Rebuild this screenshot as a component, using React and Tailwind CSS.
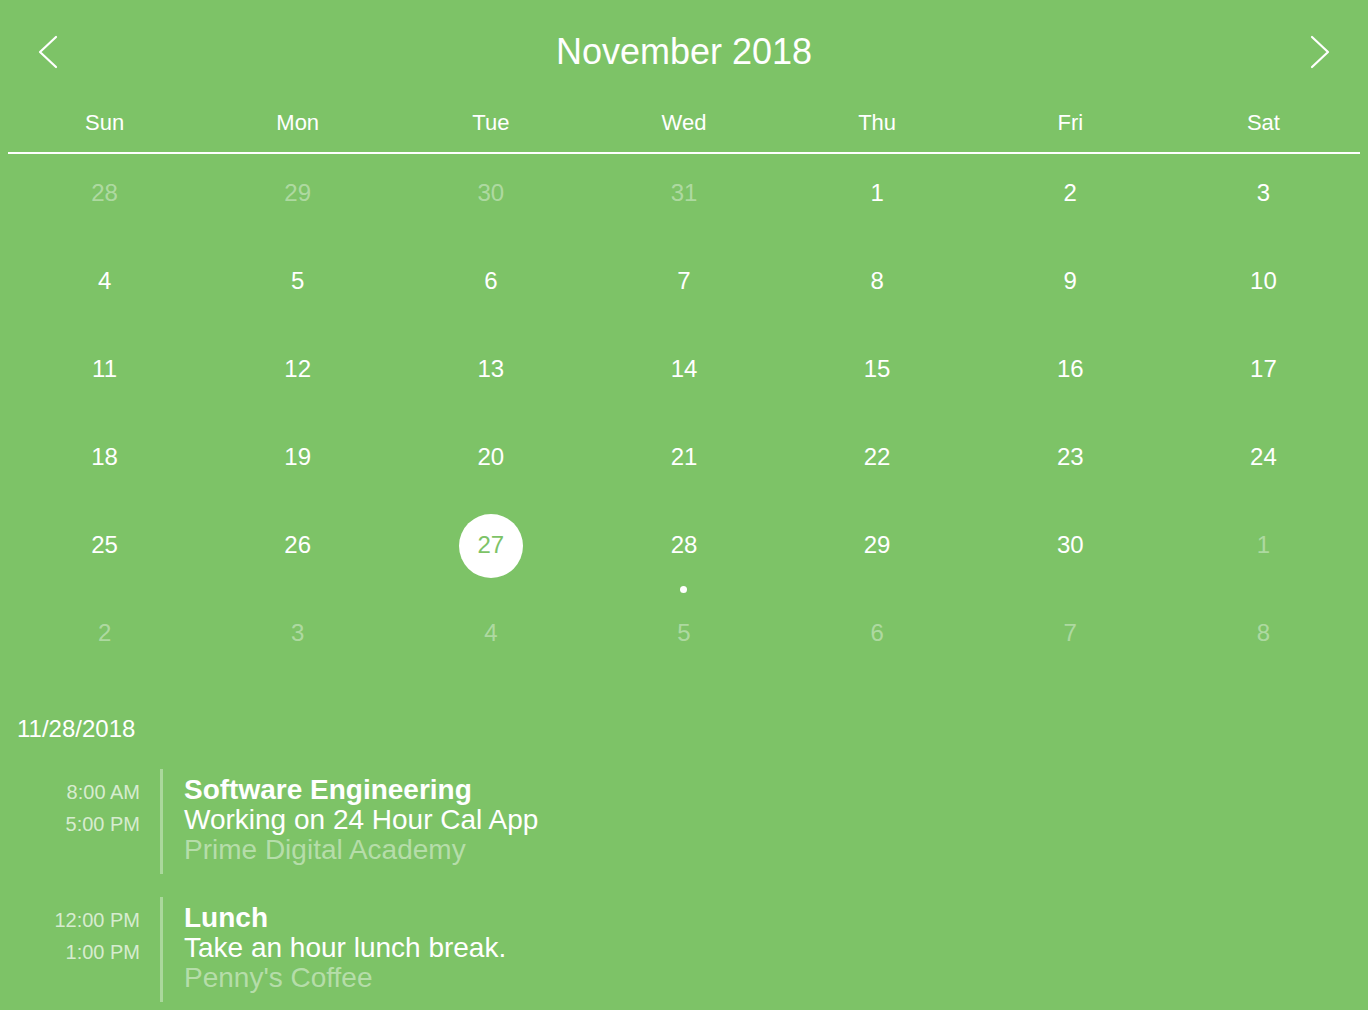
import React from 'react';

const DAYS = ['Sun', 'Mon', 'Tue', 'Wed', 'Thu', 'Fri', 'Sat'];

const buildWeeks = () => {
  const cells = [];
  [28, 29, 30, 31].forEach((d) => cells.push({ d, muted: true }));
  for (let d = 1; d <= 30; d++) cells.push({ d, muted: false, today: d === 27, dot: d === 28 });
  for (let d = 1; d <= 8; d++) cells.push({ d, muted: true });
  const weeks = [];
  for (let i = 0; i < cells.length; i += 7) weeks.push(cells.slice(i, i + 7));
  return weeks;
};

const EVENTS = [
  { start: '8:00 AM', end: '5:00 PM', title: 'Software Engineering', desc: 'Working on 24 Hour Cal App', place: 'Prime Digital Academy' },
  { start: '12:00 PM', end: '1:00 PM', title: 'Lunch', desc: 'Take an hour lunch break.', place: "Penny's Coffee" },
];

const Chevron = ({ dir }) => (
  <svg width="20" height="34" viewBox="0 0 20 34" fill="none" stroke="white" strokeWidth="2.2" strokeLinecap="round" strokeLinejoin="round">
    {dir === 'left' ? <path d="M18 2 L2 17 L18 32" /> : <path d="M2 2 L18 17 L2 32" />}
  </svg>
);

const DayCell = ({ cell }) => (
  <div className="h-[88px] flex flex-col items-center pt-[8px]">
    <div
      className={
        'w-16 h-16 rounded-full flex items-center justify-center text-[24px] leading-none pb-[2px] ' +
        (cell.today ? 'bg-white text-[#7dc367]' : cell.muted ? 'text-white/40' : 'text-white')
      }
    >
      {cell.d}
    </div>
    {cell.dot && <div className="mt-[8px] w-[7px] h-[7px] rounded-full bg-white" />}
  </div>
);

const EventRow = ({ ev }) => (
  <div className="flex">
    <div className="w-[123px] pt-[7px] text-right text-[20px] leading-[32px] text-white/70">
      <p>{ev.start}</p>
      <p>{ev.end}</p>
    </div>
    <div className="ml-5 w-[3px] bg-white/35" />
    <div className="pl-[21px] pt-[6px] pb-[9px] text-[28px] leading-[30px]">
      <p className="font-bold text-white">{ev.title}</p>
      <p className="text-white">{ev.desc}</p>
      <p className="text-white/45">{ev.place}</p>
    </div>
  </div>
);

export default function App() {
  const weeks = buildWeeks();
  return (
    <div
      className="w-full min-h-[1010px] bg-[#7dc367] text-white overflow-hidden"
      style={{ fontFamily: '"Liberation Sans", Arial, Helvetica, sans-serif' }}
    >
      <div className="h-[104px] flex items-center justify-between px-[38px]">
        <button className="flex items-center"><Chevron dir="left" /></button>
        <h1 className="text-[36px]">November 2018</h1>
        <button className="flex items-center"><Chevron dir="right" /></button>
      </div>

      <div className="px-2">
        <div className="grid grid-cols-7 h-[36px] items-center text-[22px]">
          {DAYS.map((d) => (
            <div key={d} className="text-center">{d}</div>
          ))}
        </div>
        <div className="mt-[12px] h-[2px] bg-white" />
        <div>
          {weeks.map((w, i) => (
            <div key={i} className="grid grid-cols-7">
              {w.map((c, j) => (
                <DayCell key={j} cell={c} />
              ))}
            </div>
          ))}
        </div>
      </div>

      <div className="px-[17px] pt-[34px]">
        <p className="text-[24px] leading-[26px]">11/28/2018</p>
        <div className="mt-[27px] flex flex-col gap-[23px]">
          {EVENTS.map((ev) => (
            <EventRow key={ev.title} ev={ev} />
          ))}
        </div>
      </div>
    </div>
  );
}
